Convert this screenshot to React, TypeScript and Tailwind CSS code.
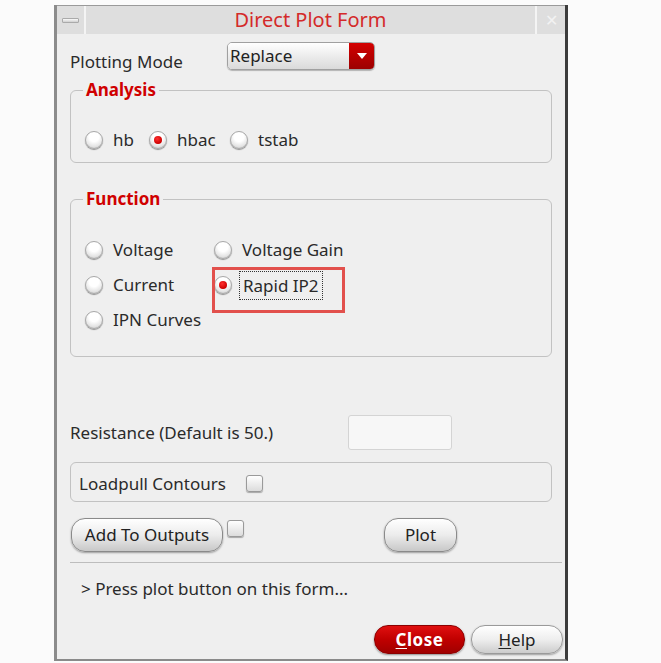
import React from "react";

const font = { fontFamily: '"Noto Sans", "Open Sans", sans-serif' };

function Radio({ checked = false }: { checked?: boolean }) {
  return (
    <span className="relative inline-flex h-[18px] w-[18px] shrink-0 items-center justify-center rounded-full border border-[#a8a8a8] bg-[radial-gradient(circle_at_50%_30%,#ffffff_35%,#e4e4e4_70%,#b8b8b8_100%)] shadow-[0_1px_1px_rgba(0,0,0,0.4)]">
      {checked && <span className="h-[8px] w-[8px] rounded-full bg-[radial-gradient(circle_at_40%_35%,#ff3030,#cc0000_70%)]" />}
    </span>
  );
}

function RadioItem({ label, checked, className = "" }: { label: string; checked?: boolean; className?: string }) {
  return (
    <div className={`flex h-[20px] items-center gap-[10px] ${className}`}>
      <Radio checked={checked} />
      <span>{label}</span>
    </div>
  );
}

function Check() {
  return <span className="inline-block h-[17px] w-[17px] rounded-[3px] border border-[#9a9a9a] bg-gradient-to-b from-[#ffffff] to-[#dcdcdc] shadow-[0_1px_1px_rgba(0,0,0,0.3)]" />;
}

function Pill({ children, className = "" }: { children: React.ReactNode; className?: string }) {
  return (
    <button className={`flex h-[34px] items-center justify-center rounded-[14px] border border-[#8a8a8a] bg-gradient-to-b from-[#ffffff] via-[#ececec] to-[#c8c8c8] text-[17px] text-[#222] shadow-[0_1px_2px_rgba(0,0,0,0.35)] ${className}`}>
      {children}
    </button>
  );
}

export default function App() {
  return (
    <div className="min-h-[663px] bg-[#fbfbfb] pl-[54px] pt-[5px] text-[17px] text-[#2a2a2a]" style={font}>
      <div className="flex h-[656px] w-[514px] flex-col border-l-[3px] border-r-[3px] border-b-[2px] border-l-[#8c8c8c] border-r-[#3c3c3c] border-b-[#8a8a8a] bg-[#efefef]">
        {/* title bar */}
        <div className="flex h-[29px] border-t border-[#9a9a9a] bg-[#dedede]">
          <div className="flex w-[29px] items-center justify-center border-r-[2px] border-[#f4f4f4]">
            <span className="h-[5px] w-[17px] rounded-[1px] border border-[#aaa] bg-gradient-to-b from-[#fafafa] to-[#cfcfcf]" />
          </div>
          <div className="flex flex-1 items-center justify-center border-r-[2px] border-[#f4f4f4] text-[20px] text-[#d42a2a]">Direct Plot Form</div>
          <div className="flex w-[28px] items-center justify-center text-[16px] text-[#f2f2f2]">✕</div>
        </div>

        <div className="flex flex-1 flex-col px-[13px]">
          {/* plotting mode */}
          <div className="mt-[8px] flex h-[28px] items-center">
            <span className="mt-[12px] w-[157px]">Plotting Mode</span>
            <div className="flex h-[28px] w-[148px] overflow-hidden rounded-[5px] border border-[#a0a0a0] shadow-[0_1px_1px_rgba(0,0,0,0.25)]">
              <div className="flex flex-1 items-center bg-gradient-to-b from-[#ffffff] to-[#dadada] pl-[2px] text-[#222]">Replace</div>
              <div className="flex w-[25px] items-center justify-center bg-gradient-to-b from-[#d40000] to-[#9c0000]">
                <svg width="10" height="6" viewBox="0 0 10 6"><path d="M0 0h10L5 6z" fill="#fff" /></svg>
              </div>
            </div>
          </div>

          {/* analysis */}
          <fieldset className="mt-[10px] h-[83px] rounded-[6px] border border-[#c2c2c2] pl-[14px] pr-[11px]">
            <legend className="ml-[-2px] px-[3px] font-bold leading-[20px] text-[#d00000]">Analysis</legend>
            <div className="mt-[30px] flex h-[20px] items-center">
              <RadioItem label="hb" className="w-[64px]" />
              <RadioItem label="hbac" checked className="w-[81px]" />
              <RadioItem label="tstab" />
            </div>
          </fieldset>

          {/* function */}
          <fieldset className="mt-[26px] h-[168px] rounded-[6px] border border-[#c2c2c2] pl-[14px] pr-[11px]">
            <legend className="ml-[-2px] px-[3px] font-bold leading-[20px] text-[#d00000]">Function</legend>
            <div className="mt-[31px] grid grid-cols-[129px_1fr] gap-y-[15px]">
              <RadioItem label="Voltage" />
              <RadioItem label="Voltage Gain" />
              <RadioItem label="Current" />
              <div className="relative flex h-[20px] items-center gap-[7px]">
                <Radio checked />
                <span className="border border-dotted border-[#333] px-[3px] leading-[27px]">Rapid IP2</span>
                <span className="absolute left-[-2px] top-[-8px] h-[46px] w-[133px] border-[3px] border-[#e2504c]" />
              </div>
              <RadioItem label="IPN Curves" />
            </div>
          </fieldset>

          {/* resistance */}
          <div className="mt-[58px] flex h-[35px] items-center">
            <span className="w-[278px]">Resistance (Default is 50.)</span>
            <span className="h-[35px] w-[104px] rounded-[3px] border border-[#d4d4d4] bg-[#f7f7f7]" />
          </div>

          {/* loadpull */}
          <div className="mt-[12px] flex h-[40px] items-center gap-[20px] rounded-[6px] border border-[#c2c2c2] pl-[8px] pt-[3px]">
            <span>Loadpull Contours</span>
            <Check />
          </div>

          {/* buttons */}
          <div className="mt-[16px] flex items-start">
            <Pill className="ml-[1px] w-[152px]">Add To Outputs</Pill>
            <span className="ml-[4px]"><Check /></span>
            <Pill className="ml-[140px] w-[73px]">Plot</Pill>
          </div>

          <div className="mr-[-10px] mt-[10px] h-px bg-[#bdbdbd]" />

          <div className="ml-[11px] mt-[13px]">&gt; Press plot button on this form...</div>

          <div className="mb-[5px] mr-[-11px] mt-auto flex justify-end gap-[6px]">
            <button className="flex h-[29px] w-[91px] items-center justify-center rounded-[14px] border border-[#8c0000] bg-gradient-to-b from-[#e01010] via-[#c00000] to-[#a00000] font-bold tracking-[0.5px] text-white shadow-[0_1px_2px_rgba(0,0,0,0.4)]">
              <span><span className="underline underline-offset-2">C</span>lose</span>
            </button>
            <button className="flex h-[29px] w-[92px] items-center justify-center rounded-[14px] border border-[#9a9a9a] bg-gradient-to-b from-[#ffffff] via-[#eeeeee] to-[#cccccc] text-[#222] shadow-[0_1px_2px_rgba(0,0,0,0.35)]">
              <span><span className="underline underline-offset-2">H</span>elp</span>
            </button>
          </div>
        </div>
      </div>
    </div>
  );
}
